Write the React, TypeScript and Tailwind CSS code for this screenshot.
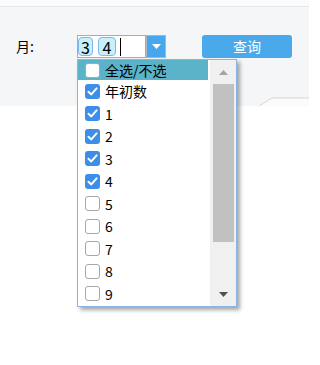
import React from "react";

const rows = [
  { label: "年初数", checked: true },
  { label: "1", checked: true },
  { label: "2", checked: true },
  { label: "3", checked: true },
  { label: "4", checked: true },
  { label: "5", checked: false },
  { label: "6", checked: false },
  { label: "7", checked: false },
  { label: "8", checked: false },
  { label: "9", checked: false },
];

function Box({ checked }: { checked: boolean }) {
  if (checked) {
    return (
      <span className="flex h-[15px] w-[15px] shrink-0 items-center justify-center rounded-[3px] bg-[#3c8ee8]">
        <svg width="11" height="11" viewBox="0 0 11 11">
          <path d="M1.5 5.8 L4.3 8.4 L9.6 2.4" fill="none" stroke="white" strokeWidth="2" strokeLinecap="round" strokeLinejoin="round" />
        </svg>
      </span>
    );
  }
  return <span className="h-[15px] w-[15px] shrink-0 rounded-[3px] border border-[#a8a8a8] bg-white" />;
}

export default function App() {
  return (
    <div
      className="relative h-[365px] w-[309px] overflow-hidden bg-white text-[14px] text-black"
      style={{ fontFamily: '"Microsoft YaHei", "Noto Sans CJK SC", "Noto Sans", sans-serif' }}
    >
      <div className="h-[7px] border-b border-[#e6e7ea] bg-[#fbfbfc]" />
      <div className="relative flex h-[99px] flex-col bg-[#f5f6f8]">
        <div className="flex items-center pt-[28px]">
          <span className="ml-[16px] w-[61px] leading-[23px]">月:</span>
          <div className="flex h-[23px] w-[69px] items-center border border-[#82b4e6] bg-white">
            <span className="flex h-[19px] w-[15px] items-center justify-center rounded-[4px] border border-[#7cb9ea] bg-[#c8f0fc] text-[16px] leading-none">3</span>
            <span className="ml-[5px] flex h-[19px] w-[18px] items-center justify-center rounded-[4px] border border-[#7cb9ea] bg-[#c8f0fc] text-[16px] leading-none">4</span>
            <span className="ml-[4px] h-[18px] w-px bg-black" />
          </div>
          <div className="flex h-[23px] w-[20px] items-center justify-center border border-[#b4b4b4] bg-[#46a6ee]">
            <svg width="9" height="5" viewBox="0 0 9 5">
              <path d="M0 0 H9 L4.5 5 Z" fill="white" />
            </svg>
          </div>
          <button className="ml-[36px] h-[23px] w-[90px] rounded-[3px] bg-[#4aa9eb] leading-[23px] text-white">查询</button>
        </div>
        <div className="mt-auto flex justify-end">
          <svg width="50" height="9" viewBox="0 0 50 9" className="block">
            <path d="M0 9 L13 1 H50 V9 Z" fill="#fbfbfb" />
            <path d="M0 9 L13 1 H50" fill="none" stroke="#d6d6d6" strokeWidth="1" />
          </svg>
        </div>
      </div>

      <div className="absolute left-[77px] top-[59px] flex h-[248px] w-[160px] border border-[#8ab4e4] bg-white shadow-[3px_3px_4px_rgba(0,0,0,0.35)]">
        <div className="flex w-[132px] flex-col">
          <div className="flex h-[20px] w-[130px] items-center gap-[5px] bg-[#5ab3c8] pl-[7px]">
            <Box checked={false} />
            <span className="leading-none">全选/不选</span>
          </div>
          {rows.map((r) => (
            <div key={r.label} className="flex h-[22.5px] items-center gap-[5px] pl-[7px]">
              <Box checked={r.checked} />
              <span className="leading-none">{r.label}</span>
            </div>
          ))}
        </div>
        <div className="flex w-[26px] flex-col bg-[#f0f0f0] pl-[3px] pr-[2px]">
          <div className="flex h-[24px] items-center justify-center">
            <svg width="9" height="5" viewBox="0 0 9 5">
              <path d="M0 5 H9 L4.5 0 Z" fill="#a3a3a3" />
            </svg>
          </div>
          <div className="h-[158px] bg-[#c1c1c1]" />
          <div className="mt-auto flex h-[24px] items-center justify-center">
            <svg width="9" height="5" viewBox="0 0 9 5">
              <path d="M0 0 H9 L4.5 5 Z" fill="#505050" />
            </svg>
          </div>
        </div>
      </div>
    </div>
  );
}
